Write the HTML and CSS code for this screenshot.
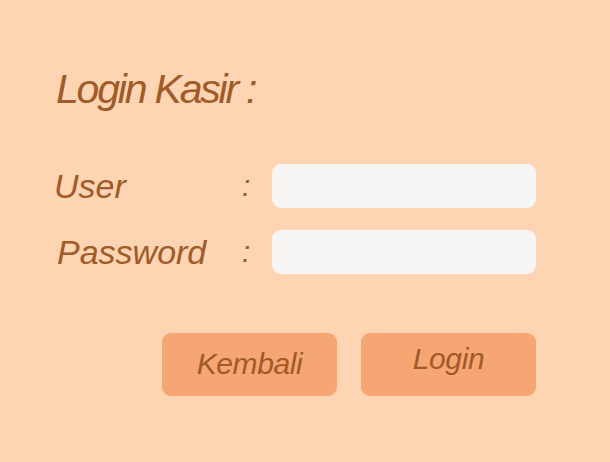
FILE: index.html
```html
<!DOCTYPE html>
<html>
<head>
<meta charset="utf-8">
<link rel="stylesheet" href="styles.css">
</head>
<body>
<div class="page">
  <h1 class="title">Login Kasir :</h1>
  <div class="form">
    <label class="label">User</label>
    <span class="colon">:</span>
    <div class="input"></div>
    <label class="label label-pass">Password</label>
    <span class="colon">:</span>
    <div class="input"></div>
  </div>
  <div class="actions">
    <div class="btn btn-back"><span>Kembali</span></div>
    <div class="btn btn-login"><span>Login</span></div>
  </div>
</div>
</body>
</html>
```
FILE: styles.css
```css
html, body {
  margin: 0;
  padding: 0;
  background: #fdd5b2;
}
.page {
  width: 610px;
  height: 462px;
  box-sizing: border-box;
  padding: 60px 0 0 56px;
  font-family: "Liberation Sans", Arial, sans-serif;
  font-style: italic;
  color: #a15a28;
}
.title {
  margin: 0;
  font-size: 41px;
  font-weight: normal;
  letter-spacing: -2.2px;
  line-height: 58px;
}
.form {
  margin-top: 46px;
  display: grid;
  grid-template-columns: 186px 30px 264px;
  grid-auto-rows: 44px;
  row-gap: 22px;
  align-items: center;
}
.label {
  font-size: 34px;
  letter-spacing: 0;
  margin-left: -2px;
}
.label-pass {
  margin-left: 1px;
}
.colon {
  font-size: 30px;
}
.input {
  height: 44px;
  background: #f7f5f4;
  border-radius: 9px;
}
.actions {
  margin-top: 59px;
  margin-left: 106px;
  display: flex;
  gap: 24px;
}
.btn {
  width: 175px;
  height: 63px;
  background: #f6a672;
  border-radius: 9px;
  display: flex;
  justify-content: center;
  font-size: 30px;
  letter-spacing: -0.4px;
}
.btn-back span {
  margin-top: 14px;
}
.btn-login span {
  margin-top: 9px;
}
```
